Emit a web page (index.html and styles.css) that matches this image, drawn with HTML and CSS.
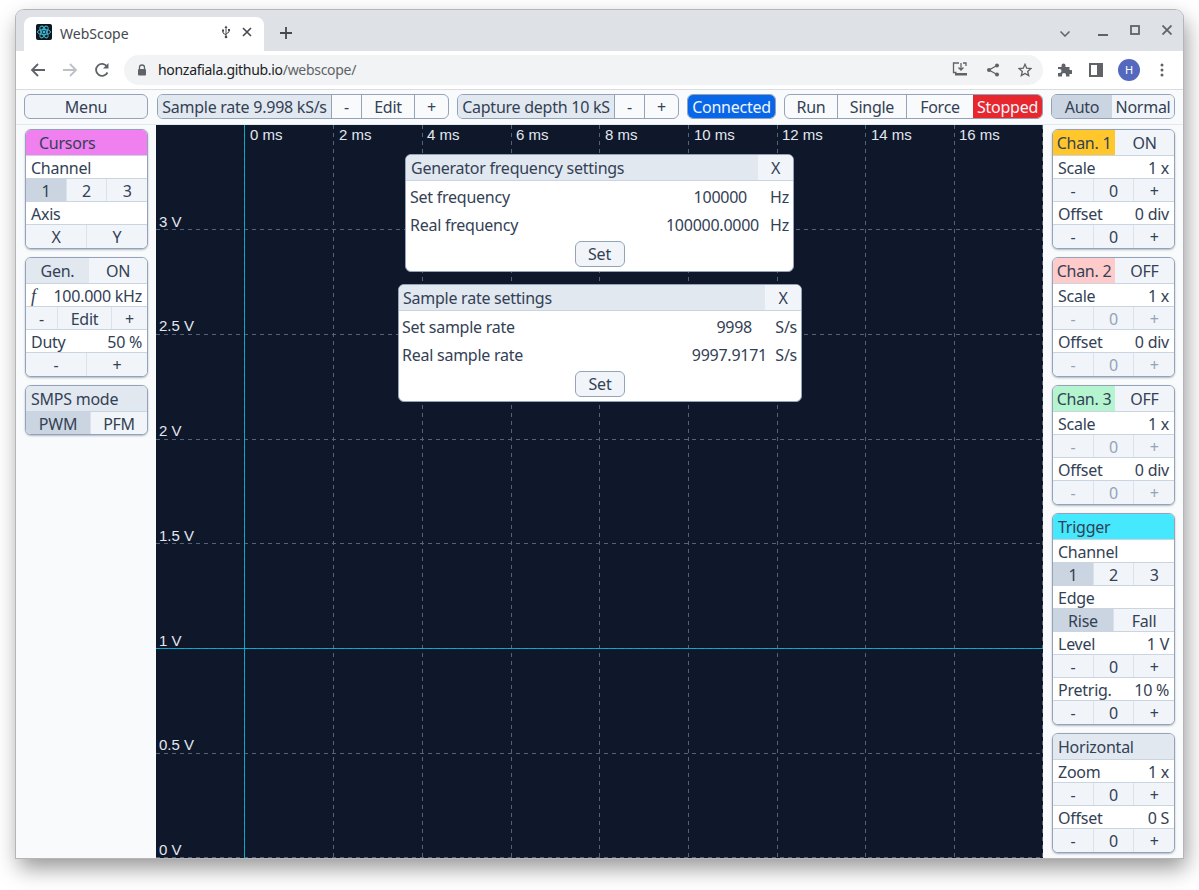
FILE: index.html
```html
<!DOCTYPE html>
<html lang="en">
<head>
    <meta charset="UTF-8">
    <title>WebScope</title>
    <link rel="stylesheet" href="styles.css">
</head>
<body>
<div class="window">
    <div class="tabstrip">
        <div class="tab">
            <svg class="favicon" width="16" height="16" viewBox="0 0 16 16">
                <rect width="16" height="16" rx="2" fill="#11161c"/>
                <g fill="none" stroke="#3fb6d3" stroke-width="1">
                    <ellipse cx="8" cy="8" rx="6.5" ry="2.6"/>
                    <ellipse cx="8" cy="8" rx="6.5" ry="2.6" transform="rotate(60 8 8)"/>
                    <ellipse cx="8" cy="8" rx="6.5" ry="2.6" transform="rotate(120 8 8)"/>
                </g>
                <circle cx="8" cy="8" r="1.4" fill="#3fb6d3"/>
            </svg>
            <span class="tab-title">WebScope</span>
            <svg class="tab-usb" width="10" height="14" viewBox="0 0 10 14">
                <path d="M5 13V2M5 10L2 8V6M5 9L8 7V5.500" fill="none" stroke="#45494e" stroke-width="1"/>
                <path d="M5 0.500L6.500 3H3.500Z" fill="#45494e"/>
                <circle cx="5" cy="12" r="1.300" fill="#45494e"/>
                <rect x="1" y="4.500" width="2" height="2" fill="#45494e"/>
                <rect x="7" y="4" width="2" height="2" fill="#45494e"/>
            </svg>
            <svg class="tab-close" width="10" height="10" viewBox="0 0 10 10">
                <path d="M1 1L9 9M9 1L1 9" stroke="#45494e" stroke-width="1.600"/>
            </svg>
        </div>
        <svg class="new-tab" width="12" height="12" viewBox="0 0 12 12">
            <path d="M6 0V12M0 6H12" stroke="#45494e" stroke-width="1.800"/>
        </svg>
        <div class="win-controls">
            <svg class="win-more" width="10" height="6" viewBox="0 0 10 6"><path d="M0.500 0.500L5 5L9.500 0.500" fill="none" stroke="#5f6368" stroke-width="1.500"/></svg>
            <svg class="win-min" width="10" height="2" viewBox="0 0 10 2"><path d="M0 1H10" stroke="#5f6368" stroke-width="2"/></svg>
            <svg width="10" height="10" viewBox="0 0 10 10"><rect x="1" y="1" width="8" height="8" fill="none" stroke="#5f6368" stroke-width="1.800"/></svg>
            <svg width="10" height="10" viewBox="0 0 10 10"><path d="M0.500 0.500L9.500 9.500M9.500 0.500L0.500 9.500" stroke="#5f6368" stroke-width="1.800"/></svg>
        </div>
    </div>

    <div class="toolbar">
        <svg class="nav-back" width="16" height="14" viewBox="0 0 16 14"><path d="M15 7H2M8 1L2 7L8 13" fill="none" stroke="#5f6368" stroke-width="1.800"/></svg>
        <svg class="nav-fwd" width="16" height="14" viewBox="0 0 16 14"><path d="M1 7H14M8 1L14 7L8 13" fill="none" stroke="#bdc1c6" stroke-width="1.800"/></svg>
        <svg class="nav-reload" width="16" height="16" viewBox="0 0 16 16"><path d="M13.500 10.500A6 6 0 1 1 13 4.500" fill="none" stroke="#5f6368" stroke-width="1.800"/><path d="M14.500 1V6.500H9Z" fill="#5f6368"/></svg>
        <div class="omnibox">
            <svg class="lock" width="10" height="12" viewBox="0 0 10 12"><path d="M2.500 5V3.500a2.500 2.500 0 0 1 5 0V5" fill="none" stroke="#5f6368" stroke-width="1.300"/><rect x="1" y="5" width="8" height="6.500" rx="1" fill="#5f6368"/></svg>
            <span class="url"><span class="url-host">honzafiala.github.io</span>/webscope/</span>
            <svg class="omni-install" width="16" height="15" viewBox="0 0 16 15"><path d="M7 1H1.500V10.500H4.500M11 1H14V4" fill="none" stroke="#5f6368" stroke-width="1.300"/><path d="M9 1V7.500M6.500 5.500L9 8L11.500 5.500" fill="none" stroke="#5f6368" stroke-width="1.300"/><path d="M3 11H15V13.500H3Z" fill="#5f6368"/></svg>
            <svg class="omni-share" width="14" height="14" viewBox="0 0 14 14"><path d="M11 2.500L3 7L11 11.500" fill="none" stroke="#5f6368" stroke-width="1.300"/><circle cx="11" cy="2.500" r="2" fill="#5f6368"/><circle cx="3" cy="7" r="2" fill="#5f6368"/><circle cx="11" cy="11.500" r="2" fill="#5f6368"/></svg>
            <svg class="omni-star" width="14" height="14" viewBox="0 0 14 14"><path d="M7 1.300L8.700 5.200L12.900 5.600L9.700 8.400L10.700 12.600L7 10.400L3.300 12.600L4.300 8.400L1.100 5.600L5.300 5.200Z" fill="none" stroke="#5f6368" stroke-width="1.300"/></svg>
        </div>
        <svg class="tool-ext" width="15" height="15" viewBox="0 0 15 15"><path d="M1 5H4.500V3.500a2 2 0 0 1 4 0V5H12.500V8H14a2 2 0 0 1 0 4H12.500V14.500H9V13a2 2 0 0 0-4 0V14.500H1V11H2.500a2 2 0 0 0 0-4H1Z" fill="#5f6368"/></svg>
        <svg class="tool-side" width="14" height="14" viewBox="0 0 14 14"><rect x="1" y="1" width="12" height="12" fill="none" stroke="#5f6368" stroke-width="2"/><rect x="8" y="1" width="5" height="12" fill="#5f6368"/></svg>
        <div class="avatar">H</div>
        <svg class="tool-menu" width="4" height="14" viewBox="0 0 4 14"><circle cx="2" cy="2" r="1.500" fill="#5f6368"/><circle cx="2" cy="7" r="1.500" fill="#5f6368"/><circle cx="2" cy="12" r="1.500" fill="#5f6368"/></svg>
    </div>

    <div class="app">
        <div class="topbar">
            <button class="bar-group menu-group"><span class="cell">Menu</span></button>
            <div class="bar-group sample-group">
                <span class="cell cell-label">Sample rate 9.998 kS/s</span><span class="cell">-</span><span class="cell">Edit</span><span class="cell">+</span>
            </div>
            <div class="bar-group depth-group">
                <span class="cell cell-label">Capture depth 10 kS</span><span class="cell">-</span><span class="cell">+</span>
            </div>
            <div class="bar-group connected-group"><span class="cell cell-connected">Connected</span></div>
            <div class="bar-group run-group">
                <span class="cell">Run</span><span class="cell">Single</span><span class="cell">Force</span><span class="cell cell-stopped">Stopped</span>
            </div>
            <div class="bar-group mode-group">
                <span class="cell cell-active">Auto</span><span class="cell cell-plain">Normal</span>
            </div>
        </div>

        <div class="main">
            <div class="sidebar">
                <div class="panel">
                    <div class="row row-head head-cursors"><span class="head-indent">Cursors</span></div>
                    <div class="row row-value"><span>Channel</span></div>
                    <div class="row row-btns"><span class="btn btn-active">1</span><span class="btn">2</span><span class="btn">3</span></div>
                    <div class="row row-value"><span>Axis</span></div>
                    <div class="row row-btns"><span class="btn">X</span><span class="btn">Y</span></div>
                </div>
                <div class="panel">
                    <div class="row row-head"><span class="btn head-title gen-title">Gen.</span><span class="btn head-toggle gen-toggle">ON</span></div>
                    <div class="row row-value"><span class="f-sign">f</span><span>100.000 kHz</span></div>
                    <div class="row row-btns row-edit"><span class="btn">-</span><span class="btn">Edit</span><span class="btn">+</span></div>
                    <div class="row row-value"><span>Duty</span><span>50 %</span></div>
                    <div class="row row-btns"><span class="btn">-</span><span class="btn">+</span></div>
                </div>
                <div class="panel">
                    <div class="row row-head row-title"><span>SMPS mode</span></div>
                    <div class="row row-btns row-pwm"><span class="btn btn-active">PWM</span><span class="btn">PFM</span></div>
                </div>
            </div>

            <div class="scope">
                <svg class="scope-grid" width="887" height="733">
                    <g class="grid-lines">
                        <path d="M88.500 0V733"/><path d="M177.500 0V733"/><path d="M266.500 0V733"/><path d="M355.500 0V733"/><path d="M443.500 0V733"/>
                        <path d="M532.500 0V733"/><path d="M621.500 0V733"/><path d="M709.500 0V733"/><path d="M798.500 0V733"/><path d="M886.500 0V733"/>
                        <path d="M0 104.500H887"/><path d="M0 209.500H887"/><path d="M0 314.500H887"/><path d="M0 418.500H887"/><path d="M0 523.500H887"/><path d="M0 628.500H887"/><path d="M0 732.500H887"/>
                    </g>
                    <g class="scope-cursor">
                        <path d="M88.500 0V733"/>
                        <path d="M0 523.500H887"/>
                    </g>
                    <g class="scope-labels">
                        <text x="94" y="15">0 ms</text><text x="183" y="15">2 ms</text><text x="271" y="15">4 ms</text><text x="360" y="15">6 ms</text><text x="449" y="15">8 ms</text>
                        <text x="538" y="15">10 ms</text><text x="626" y="15">12 ms</text><text x="715" y="15">14 ms</text><text x="803" y="15">16 ms</text>
                        <text x="3" y="102">3 V</text><text x="3" y="206">2.5 V</text><text x="3" y="311">2 V</text><text x="3" y="416">1.5 V</text>
                        <text x="3" y="521">1 V</text><text x="3" y="625">0.5 V</text><text x="3" y="730">0 V</text>
                    </g>
                </svg>

                <div class="dialog dialog-freq">
                    <div class="dialog-head"><span class="dialog-title">Generator frequency settings</span><span class="dialog-x">X</span></div>
                    <div class="dialog-row"><span>Set frequency</span><span class="val-set">100000</span><span>Hz</span></div>
                    <div class="dialog-row"><span>Real frequency</span><span>100000.0000</span><span>Hz</span></div>
                    <div class="dialog-foot"><span class="set-btn">Set</span></div>
                </div>
                <div class="dialog dialog-rate">
                    <div class="dialog-head"><span class="dialog-title">Sample rate settings</span><span class="dialog-x">X</span></div>
                    <div class="dialog-row"><span>Set sample rate</span><span class="val-set">9998</span><span>S/s</span></div>
                    <div class="dialog-row"><span>Real sample rate</span><span>9997.9171</span><span>S/s</span></div>
                    <div class="dialog-foot"><span class="set-btn">Set</span></div>
                </div>
            </div>

            <div class="sidebar">
                <div class="panel">
                    <div class="row row-head"><span class="btn head-title head-ch1">Chan. 1</span><span class="btn head-toggle">ON</span></div>
                    <div class="row row-value"><span>Scale</span><span>1 x</span></div>
                    <div class="row row-btns"><span class="btn">-</span><span class="btn">0</span><span class="btn">+</span></div>
                    <div class="row row-value"><span>Offset</span><span>0 div</span></div>
                    <div class="row row-btns"><span class="btn">-</span><span class="btn">0</span><span class="btn">+</span></div>
                </div>
                <div class="panel">
                    <div class="row row-head"><span class="btn head-title head-ch2">Chan. 2</span><span class="btn head-toggle">OFF</span></div>
                    <div class="row row-value"><span>Scale</span><span>1 x</span></div>
                    <div class="row row-btns row-off"><span class="btn">-</span><span class="btn">0</span><span class="btn">+</span></div>
                    <div class="row row-value"><span>Offset</span><span>0 div</span></div>
                    <div class="row row-btns row-off"><span class="btn">-</span><span class="btn">0</span><span class="btn">+</span></div>
                </div>
                <div class="panel">
                    <div class="row row-head"><span class="btn head-title head-ch3">Chan. 3</span><span class="btn head-toggle">OFF</span></div>
                    <div class="row row-value"><span>Scale</span><span>1 x</span></div>
                    <div class="row row-btns row-off"><span class="btn">-</span><span class="btn">0</span><span class="btn">+</span></div>
                    <div class="row row-value"><span>Offset</span><span>0 div</span></div>
                    <div class="row row-btns row-off"><span class="btn">-</span><span class="btn">0</span><span class="btn">+</span></div>
                </div>
                <div class="panel">
                    <div class="row row-head head-trigger"><span>Trigger</span></div>
                    <div class="row row-value"><span>Channel</span></div>
                    <div class="row row-btns"><span class="btn btn-active">1</span><span class="btn">2</span><span class="btn">3</span></div>
                    <div class="row row-value"><span>Edge</span></div>
                    <div class="row row-btns row-edge"><span class="btn btn-active">Rise</span><span class="btn">Fall</span></div>
                    <div class="row row-value"><span>Level</span><span>1 V</span></div>
                    <div class="row row-btns"><span class="btn">-</span><span class="btn">0</span><span class="btn">+</span></div>
                    <div class="row row-value"><span>Pretrig.</span><span>10 %</span></div>
                    <div class="row row-btns"><span class="btn">-</span><span class="btn">0</span><span class="btn">+</span></div>
                </div>
                <div class="panel">
                    <div class="row row-head row-title"><span>Horizontal</span></div>
                    <div class="row row-value"><span>Zoom</span><span>1 x</span></div>
                    <div class="row row-btns"><span class="btn">-</span><span class="btn">0</span><span class="btn">+</span></div>
                    <div class="row row-value"><span>Offset</span><span>0 S</span></div>
                    <div class="row row-btns"><span class="btn">-</span><span class="btn">0</span><span class="btn">+</span></div>
                </div>
            </div>
        </div>
    </div>
</div>
</body>
</html>
```

FILE: styles.css
```css
html, body {
    margin: 0;
    height: 890px;
    overflow: hidden;
    background-color: #fff;
}
body {
    padding: 10px 16px 0;
    box-sizing: border-box;
    font-family: "Noto Sans", sans-serif;
    color: #334155;
}
svg {
    display: block;
    flex: none;
}

/* browser frame */
.window {
    width: 1167px;
    height: 848px;
    display: flex;
    flex-direction: column;
    border-radius: 8px 8px 0 0;
    box-shadow: 0 0 0 1px #b4b5b7, 3px 10px 22px rgba(0, 0, 0, 0.42);
    overflow: hidden;
}
.tabstrip {
    height: 41px;
    flex: none;
    box-sizing: border-box;
    padding: 7px 0 0 8px;
    display: flex;
    align-items: flex-start;
    background-color: #dee1e6;
}
.tab {
    width: 240px;
    height: 34px;
    box-sizing: border-box;
    padding: 0 12px 4px 12px;
    display: flex;
    align-items: center;
    background-color: #fff;
    border-radius: 8px 8px 0 0;
}
.tab-title {
    flex: 1;
    margin-left: 8px;
    padding-top: 2px;
    font-size: 14px;
    color: #45494e;
}
.tab-close {
    margin-left: 11px;
}
.new-tab {
    margin: 10px 0 0 16px;
}
.win-controls {
    margin-left: auto;
    height: 26px;
    display: flex;
    align-items: center;
    gap: 22px;
    padding-right: 11px;
}
.win-controls .win-more {
    margin: 8px 6px 0 0;
}
.win-controls .win-min {
    margin-top: 10px;
}
.toolbar {
    height: 39px;
    flex: none;
    box-sizing: border-box;
    display: flex;
    align-items: center;
    background-color: #fff;
    border-bottom: 1px solid #dadce0;
    padding: 0 0 1px 14px;
}
.nav-fwd {
    margin-left: 16px;
}
.nav-reload {
    margin-left: 16px;
}
.omnibox {
    width: 919px;
    height: 30px;
    margin-left: 14px;
    box-sizing: border-box;
    display: flex;
    align-items: center;
    padding: 0 11px 0 13px;
    background-color: #f1f3f4;
    border-radius: 15px;
}
.url {
    flex: 1;
    margin-left: 11px;
    font-size: 14px;
    letter-spacing: -0.3px;
    color: #5f6368;
}
.url-host {
    color: #202124;
}
.omni-share {
    margin-left: 18px;
}
.omni-star {
    margin-left: 18px;
}
.tool-ext {
    margin-left: 14px;
}
.tool-side {
    margin-left: 17px;
}
.avatar {
    width: 22px;
    height: 22px;
    margin-left: 15px;
    border-radius: 50%;
    background-color: #5468bd;
    color: #fff;
    font-size: 11px;
    line-height: 22px;
    text-align: center;
}
.tool-menu {
    margin-left: 20px;
}

/* app */
.app {
    flex: 1;
    min-height: 0;
    display: flex;
    flex-direction: column;
    background-color: #f8fafc;
    font-size: 16px;
}
.topbar {
    height: 35px;
    flex: none;
    box-sizing: border-box;
    padding: 4px 0 0 8px;
    display: flex;
    align-items: flex-start;
    border-bottom: 1px solid #e2e8f0;
}
.bar-group {
    height: 25px;
    box-sizing: border-box;
    padding: 0;
    display: grid;
    grid-auto-flow: column;
    border: 1px solid #94a3b8;
    border-radius: 6px;
    overflow: hidden;
    background-color: #f8fafc;
    color: inherit;
    font: inherit;
}
.menu-group {
    width: 124px;
    background-color: #f1f5f9;
}
.sample-group {
    width: 292px;
    margin-left: 9px;
    grid-template-columns: 173px 30px 53px 1fr;
}
.depth-group {
    width: 222px;
    margin-left: 8px;
    grid-template-columns: 156px 30px 1fr;
}
.connected-group {
    width: 89px;
    margin-left: 8px;
}
.run-group {
    width: 259px;
    margin-left: 8px;
    grid-template-columns: 52px 69px 67px 1fr;
}
.mode-group {
    width: 124px;
    margin-left: 8px;
    grid-template-columns: 60px 1fr;
}
.cell {
    display: block;
    line-height: 25px;
    text-align: center;
    white-space: nowrap;
    letter-spacing: -0.25px;
    border-left: 1px solid #94a3b8;
}
.cell:first-child {
    border-left: none;
}
.cell-label {
    background-color: #e2e8f0;
}
.cell-connected {
    background-color: #0866e8;
    color: #f1f5f9;
}
.cell-stopped {
    background-color: #e8262e;
    color: #f1f5f9;
    border-left: none;
}
.cell-active {
    background-color: #cbd5e1;
}
.cell-plain {
    background-color: #f1f5f9;
    border-left: none;
}

.main {
    flex: 1;
    min-height: 0;
    display: flex;
}
.sidebar {
    width: 140px;
    flex: none;
    box-sizing: border-box;
    padding: 4px 8px 0 9px;
    display: flex;
    flex-direction: column;
    gap: 8px;
}
.panel {
    border: 1px solid #94a3b8;
    border-radius: 6px;
    overflow: hidden;
    box-shadow: 0 1px 2px rgba(71, 85, 105, 0.4);
    background-color: #fff;
}
.row {
    height: 23px;
    display: flex;
    line-height: 25px;
    border-bottom: 1px solid #cbd5e1;
    box-sizing: border-box;
    letter-spacing: -0.25px;
}
.row:last-child {
    border-bottom: none;
}
.row-head {
    height: 26px;
    line-height: 27px;
}
.row-title {
    background-color: #e2e8f0;
    padding: 0 5px;
}
.row-value {
    justify-content: space-between;
    padding: 0 5px;
    background-color: #fff;
}
.row-btns {
    background-color: #f1f5f9;
}
.btn {
    flex: 1;
    text-align: center;
    border-left: 1px solid #dbe2ea;
    white-space: nowrap;
}
.btn:first-child {
    border-left: none;
}
.btn-active {
    background-color: #cbd5e1;
}
.row-off .btn {
    color: #94a3b8;
}
.head-indent {
    margin-left: 13px;
}
.head-cursors {
    background-color: #f07ff0;
}
.head-trigger {
    background-color: #45e8fd;
    padding: 0 5px;
}
.head-title {
    width: 62px;
    flex: none;
}
.head-toggle {
    background-color: #f1f5f9;
    border-left: none;
}
.head-ch1 {
    background-color: #ffc72c;
}
.head-ch2 {
    background-color: #fecaca;
}
.head-ch3 {
    background-color: #b4f5d0;
}
.gen-title {
    width: 63px;
    background-color: #e2e8f0;
}
.f-sign {
    font-family: "Liberation Serif", serif;
    font-style: italic;
    font-size: 18px;
}
.row-edit .btn:first-child {
    flex: none;
    width: 31px;
}
.row-edit .btn:last-child {
    flex: none;
    width: 35px;
}
.row-edge .btn:first-child {
    flex: none;
    width: 60px;
}
.row .btn-active:first-child {
    letter-spacing: -0.25px;
}
.row-pwm {
    height: 22px;
}
.row-pwm .btn:first-child {
    flex: none;
    width: 64px;
}

/* scope area */
.scope {
    width: 887px;
    flex: none;
    position: relative;
    background-color: #0f172a;
}
.grid-lines path {
    stroke: #566377;
    stroke-width: 1;
    stroke-dasharray: 4 4;
    fill: none;
}
.scope-cursor path {
    stroke: #06b6d4;
    stroke-width: 1;
    opacity: 0.9;
    fill: none;
}
.scope-labels text {
    font-family: "Liberation Sans", sans-serif;
    font-size: 15px;
    fill: #e2e8f0;
}

/* dialogs over the scope */
.dialog {
    position: absolute;
    background-color: #fff;
    border: 1px solid #94a3b8;
    border-radius: 6px;
    overflow: hidden;
    letter-spacing: -0.25px;
}
.dialog-freq {
    left: 249px;
    top: 29px;
    width: 387px;
}
.dialog-rate {
    left: 242px;
    top: 159px;
    width: 402px;
}
.dialog-head {
    height: 26px;
    display: flex;
    justify-content: space-between;
    line-height: 27px;
    background-color: #e2e8f0;
    border-bottom: 1px solid #cbd5e1;
    box-sizing: border-box;
}
.dialog-title {
    padding-left: 5px;
}
.dialog-rate .dialog-title {
    padding-left: 4px;
}
.dialog-x {
    width: 35px;
    text-align: center;
    background-color: #f1f5f9;
}
.dialog-rate .dialog-x {
    width: 36px;
}
.dialog-row {
    height: 28px;
    box-sizing: border-box;
    padding: 2px 4px 0;
    line-height: 28px;
    display: grid;
    grid-template-columns: 1fr auto 30px;
}
.dialog-rate .dialog-row {
    padding-left: 3px;
}
.dialog-row span:last-child {
    text-align: right;
}
.dialog-freq .val-set {
    padding-right: 12px;
}
.dialog-rate .val-set {
    padding-right: 15px;
}
.dialog-foot {
    height: 34px;
    box-sizing: border-box;
    padding-top: 4px;
    text-align: center;
}
.set-btn {
    display: inline-block;
    width: 50px;
    box-sizing: border-box;
    height: 26px;
    line-height: 25px;
    border: 1px solid #94a3b8;
    border-radius: 6px;
    background-color: #f1f5f9;
}
```
